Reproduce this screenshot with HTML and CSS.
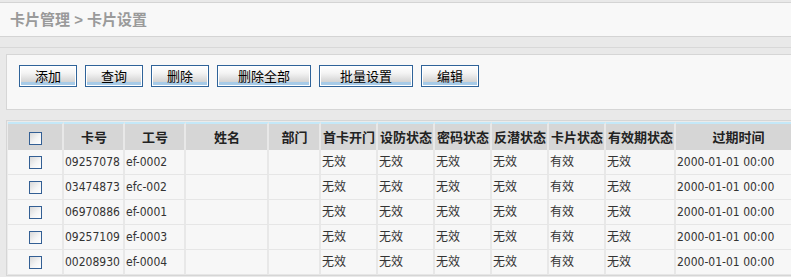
FILE: index.html
```html
<!DOCTYPE html>
<html lang="zh-CN">
<head>
    <meta charset="UTF-8">
    <meta name="viewport" content="width=device-width, initial-scale=1.0">
    <title>卡片设置</title>
    <link rel="stylesheet" href="styles.css">
</head>
<body>
    <div class="crumb">卡片管理 &gt; 卡片设置</div>

    <div class="main">
        <div class="toolbar">
            <button class="btn">添加</button>
            <button class="btn">查询</button>
            <button class="btn">删除</button>
            <button class="btn wide">删除全部</button>
            <button class="btn wide">批量设置</button>
            <button class="btn">编辑</button>
        </div>

        <div class="grid-wrap">
            <table class="grid">
                <colgroup>
                    <col class="c-chk">
                    <col class="c-no">
                    <col class="c-no">
                    <col class="c-name">
                    <col class="c-dept">
                    <col class="c-st">
                    <col class="c-st">
                    <col class="c-st">
                    <col class="c-st">
                    <col class="c-st">
                    <col class="c-valid">
                    <col class="c-time">
                </colgroup>
                <thead>
                    <tr>
                        <th><input type="checkbox" class="chk"></th>
                        <th>卡号</th>
                        <th>工号</th>
                        <th>姓名</th>
                        <th>部门</th>
                        <th>首卡开门</th>
                        <th>设防状态</th>
                        <th>密码状态</th>
                        <th>反潜状态</th>
                        <th>卡片状态</th>
                        <th>有效期状态</th>
                        <th>过期时间</th>
                    </tr>
                </thead>
                <tbody>
                    <tr>
                        <td class="center"><input type="checkbox" class="chk"></td>
                        <td>09257078</td><td>ef-0002</td><td></td><td></td>
                        <td>无效</td><td>无效</td><td>无效</td><td>无效</td><td>有效</td><td>无效</td>
                        <td>2000-01-01 00:00</td>
                    </tr>
                    <tr>
                        <td class="center"><input type="checkbox" class="chk"></td>
                        <td>03474873</td><td>efc-002</td><td></td><td></td>
                        <td>无效</td><td>无效</td><td>无效</td><td>无效</td><td>有效</td><td>无效</td>
                        <td>2000-01-01 00:00</td>
                    </tr>
                    <tr>
                        <td class="center"><input type="checkbox" class="chk"></td>
                        <td>06970886</td><td>ef-0001</td><td></td><td></td>
                        <td>无效</td><td>无效</td><td>无效</td><td>无效</td><td>有效</td><td>无效</td>
                        <td>2000-01-01 00:00</td>
                    </tr>
                    <tr>
                        <td class="center"><input type="checkbox" class="chk"></td>
                        <td>09257109</td><td>ef-0003</td><td></td><td></td>
                        <td>无效</td><td>无效</td><td>无效</td><td>无效</td><td>有效</td><td>无效</td>
                        <td>2000-01-01 00:00</td>
                    </tr>
                    <tr>
                        <td class="center"><input type="checkbox" class="chk"></td>
                        <td>00208930</td><td>ef-0004</td><td></td><td></td>
                        <td>无效</td><td>无效</td><td>无效</td><td>无效</td><td>有效</td><td>无效</td>
                        <td>2000-01-01 00:00</td>
                    </tr>
                </tbody>
            </table>
        </div>
    </div>
</body>
</html>
```

FILE: styles.css
```css
html, body {
    margin: 0;
    padding: 0;
    overflow: hidden;
}

body {
    background-color: #e9e9e9;
    font-family: "DejaVu Sans Condensed", "Liberation Sans", "Noto Sans CJK SC", sans-serif;
    font-size: 12px;
    color: #333;
}

.crumb {
    margin-top: 2px;
    height: 33px;
    line-height: 33px;
    padding-left: 10px;
    background-color: #f8f8f8;
    border-top: 1px solid #d4d4d4;
    border-bottom: 1px solid #d4d4d4;
    font-family: "Liberation Sans", "Noto Sans CJK SC", sans-serif;
    font-size: 15px;
    font-weight: bold;
    color: #9a9a9a;
}

.main {
    width: 830px;
    margin-top: 10px;
    border-top: 1px solid #d8d8d8;
    padding: 6px 0 0 6px;
}

.toolbar {
    box-sizing: border-box;
    height: 56px;
    padding: 10px 12px;
    background-color: #f8f8f8;
    border: 1px solid #d6d6d6;
    display: flex;
    align-items: flex-start;
    gap: 8px;
}

.btn {
    box-sizing: border-box;
    width: 58px;
    height: 22px;
    padding: 0;
    margin: 0;
    border: 1px solid #2f6399;
    box-shadow: inset 0 0 0 1px #fff;
    background: linear-gradient(#ffffff 0%, #f4f4f4 35%, #d3d3d3 80%, #a7cbe8 81%, #a7cbe8 100%);
    font-family: "Noto Sans CJK SC", sans-serif;
    font-size: 13px;
    line-height: 18px;
    color: #000;
    cursor: pointer;
}

.btn.wide {
    width: 94px;
}

.grid-wrap {
    margin-top: 10px;
    border: 1px solid #d6d6d6;
    padding: 1px 0 0 1px;
    background-color: #ebebeb;
}

.grid {
    table-layout: fixed;
    border-collapse: separate;
    border-spacing: 0;
    width: 794px;
}

.c-chk { width: 56px; }
.c-no { width: 61px; }
.c-name { width: 83px; }
.c-dept { width: 52px; }
.c-st { width: 57px; }
.c-valid { width: 70px; }
.c-time { width: 126px; }

.grid th, .grid td {
    padding: 0 0 0 1px;
    border-right: 2px solid #e8e8e8;
    white-space: nowrap;
    overflow: hidden;
}

.grid th {
    height: 26px;
    border-top: 2px solid #c4e8f8;
    background-color: #d6d6d6;
    font-family: "Noto Sans CJK SC", sans-serif;
    font-size: 13px;
    font-weight: bold;
    color: #222;
    text-align: center;
    line-height: 26px;
}

.grid td {
    height: 24px;
    border-bottom: 1px solid #e6e6e6;
    background-color: #f7f7f7;
    line-height: 24px;
}

.grid td.center {
    text-align: center;
}

.chk {
    appearance: none;
    -webkit-appearance: none;
    box-sizing: border-box;
    width: 13px;
    height: 13px;
    margin: 0;
    vertical-align: middle;
    border: 1px solid #335f94;
    background: linear-gradient(135deg, #d8d8d8 0%, #f4f4f4 55%, #ffffff 100%);
}
```
